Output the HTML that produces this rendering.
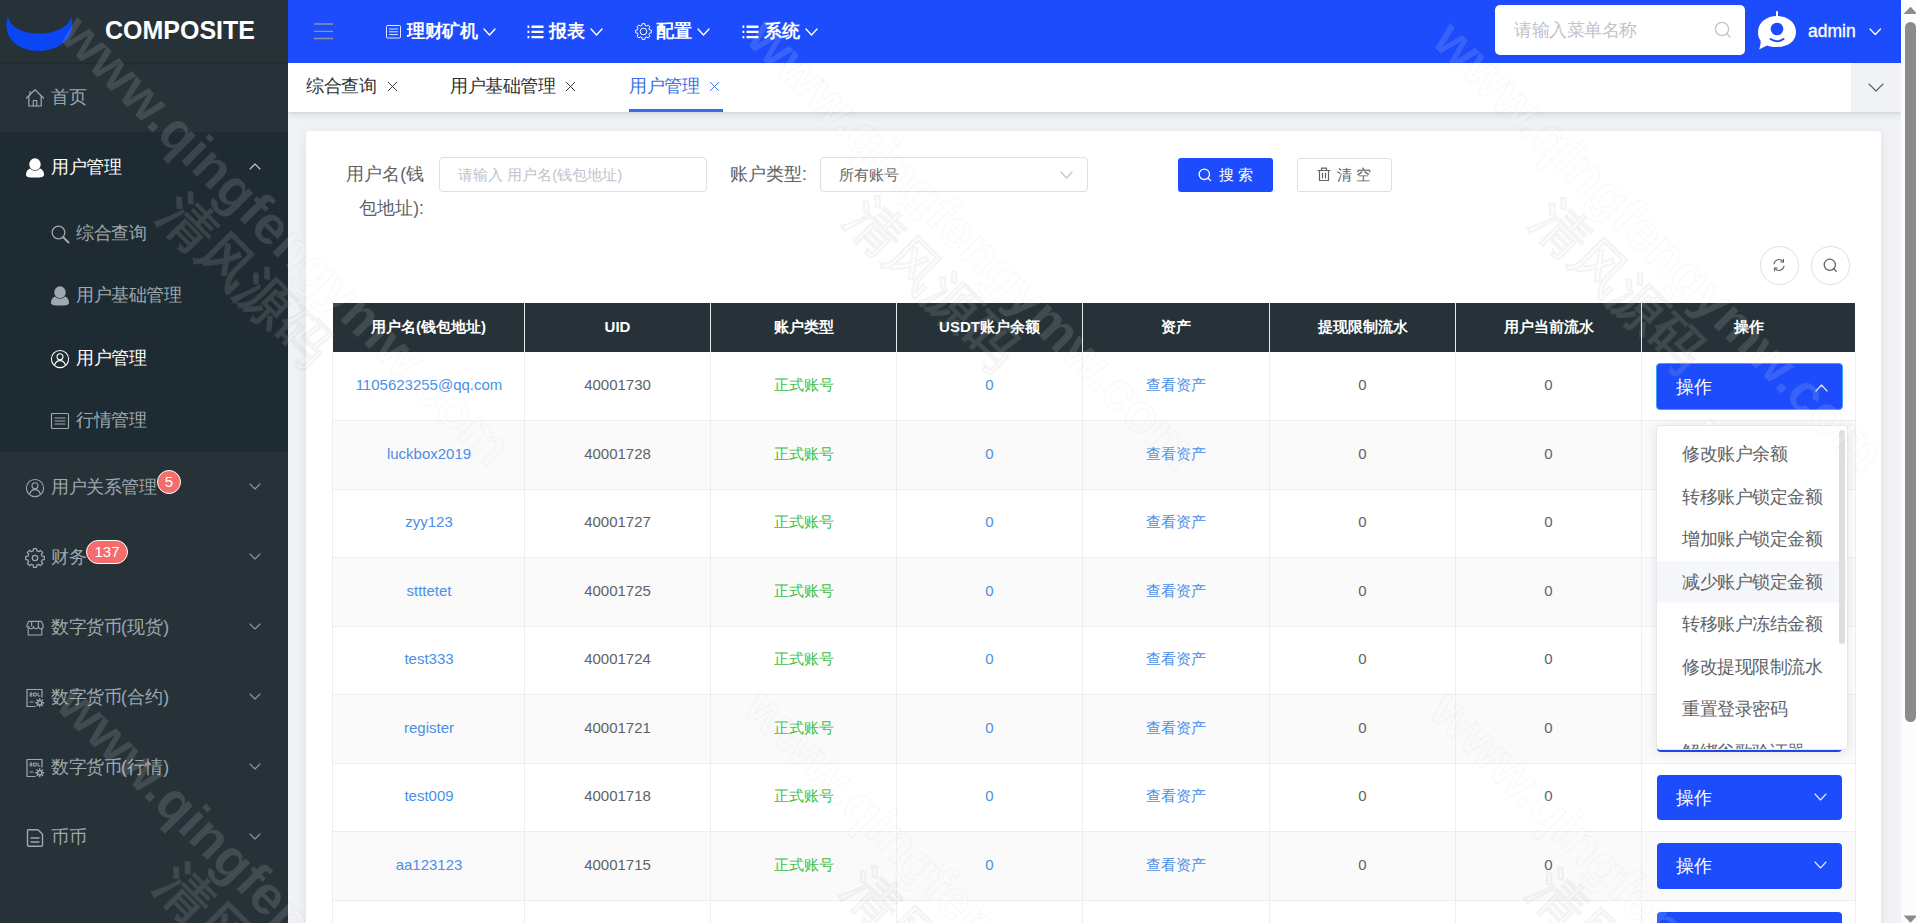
<!DOCTYPE html>
<html lang="zh">
<head>
<meta charset="utf-8">
<title>COMPOSITE</title>
<style>
*{box-sizing:border-box;margin:0;padding:0}
html,body{width:1916px;height:923px;overflow:hidden;background:#f0f2f5;font-family:"Liberation Sans",sans-serif;}
body{position:relative;color:#606266;font-size:15px}
.abs{position:absolute}
svg{display:block}
/* sidebar */
#side{position:absolute;left:0;top:0;width:288px;height:923px;background:#263238;overflow:hidden;z-index:4}
#logo{position:absolute;left:0;top:0;width:288px;height:62px;background:#263238;box-shadow:0 1px 3px rgba(0,0,0,.25)}
#logo .t{position:absolute;left:105px;top:15px;font-size:25px;line-height:30px;font-weight:bold;color:#fff;letter-spacing:0}
.mi{position:absolute;left:0;width:288px;height:70px;color:#a7b1b7;font-size:17.5px;line-height:70px}
.mi .ic{position:absolute;left:25px;top:26px;width:19px;height:19px}
.mi .tx{position:absolute;left:51px;top:0;white-space:nowrap;letter-spacing:-0.5px}
.mi .ar{position:absolute;left:249px;top:31px;width:12px;height:8px}
.smi{position:absolute;left:0;width:288px;height:62px;color:#a7b1b7;font-size:17.5px;line-height:62px}
.smi .ic{position:absolute;left:50px;top:22px;width:19px;height:19px}
.smi .tx{position:absolute;left:76px;top:0;white-space:nowrap;letter-spacing:-0.5px}
#sub{position:absolute;left:0;top:132px;width:288px;height:320px;background:#1f2b32}
.badge{position:absolute;height:22px;min-width:22px;border-radius:11px;background:#f56c6c;color:#fff;font-size:15px;line-height:20px;text-align:center;border:1px solid #fff;padding:0 6px}
/* top bar */
#top{position:absolute;left:288px;top:0;width:1613px;height:62.5px;background:#1c4cfb;z-index:3}
.tm{position:absolute;top:0;height:62px;line-height:62px;color:#fff;font-size:17.5px;white-space:nowrap;font-weight:bold;letter-spacing:-0.5px}
/* tabs */
#tabs{position:absolute;left:288px;top:62.5px;width:1613px;height:49.5px;background:#fff;box-shadow:0 1px 9px rgba(0,21,41,.15),0 1px 3px rgba(0,0,0,.06);z-index:2}
.tab{position:absolute;top:0;height:49px;line-height:47px;font-size:17.5px;color:#303133;white-space:nowrap;letter-spacing:-0.5px}
/* card */
#card{position:absolute;left:306px;top:131px;width:1575px;height:820px;background:#fff;border-radius:4px;box-shadow:0 2px 12px 0 rgba(0,0,0,.08)}
.lbl{position:absolute;font-size:17.5px;color:#606266;line-height:34px;white-space:nowrap}
.inp{position:absolute;height:35px;border:1px solid #dcdfe6;border-radius:4px;background:#fff;font-size:15px;line-height:33px;padding-left:18px;white-space:nowrap}
.btn{position:absolute;height:34px;border-radius:3px;font-size:15px;line-height:32px;text-align:center;white-space:nowrap}
.circ{position:absolute;width:38.5px;height:38.5px;border-radius:50%;border:1px solid #dcdfe6;background:#fff}
/* table */
#tbl{position:absolute;left:333px;top:303px;width:1522px;height:640px}
.th{position:absolute;top:0;height:49px;background:#263238;color:#fff;font-weight:bold;font-size:15px;line-height:47px;text-align:center;white-space:nowrap}
.row{position:absolute;left:-1px;width:1524px;border-bottom:1px solid #ebeef5;border-left:1px solid #ebeef5;border-right:1px solid #ebeef5}
.td{position:absolute;top:0;height:100%;text-align:center;font-size:15px;color:#606266;border-right:1px solid #ebeef5;white-space:nowrap}
.lk{color:#4a8fe8}
.gr{color:#3dbf3d}
.op{position:absolute;left:1324px;width:185px;height:45.5px;border-radius:4px;background:#1c4cfb;color:#fff;font-size:17.5px;line-height:45px;padding-left:18px}
/* dropdown */
#dd{position:absolute;left:1656px;top:425px;width:192px;height:325px;background:#fff;border-radius:4px;border:1px solid #e4e7ed;box-shadow:0 2px 12px 0 rgba(0,0,0,.1);overflow:hidden}
.di{position:absolute;left:0;width:189px;height:42.5px;line-height:42px;font-size:17.5px;color:#606266;padding-left:25px;white-space:nowrap;letter-spacing:-0.5px}
/* scrollbar */
#sb{position:absolute;left:1901px;top:0;width:15px;height:923px;background:#fcfcfc}
.wm{position:absolute;width:760px;height:114px;margin-left:-380px;margin-top:-57px;text-align:center;font-size:54px;font-weight:bold;line-height:57px;color:rgba(255,255,255,.125);-webkit-text-stroke:0.8px rgba(0,0,0,.045);transform:rotate(45deg);white-space:nowrap;pointer-events:none;z-index:50}
#sb{z-index:60}
</style>
</head>
<body>
<div id="side">
<div id="sub"></div>
<div id="logo"><svg class="abs" style="left:5px;top:14px" width="68" height="38" viewBox="0 0 68 38"><path d="M3 2 C-4 22 12 37 33 37 C56 37 72 22 66 2 C65 12 52 19.5 34 19.5 C16 19.5 4 12 3 2Z" fill="#0b46f5"/></svg><div class="t">COMPOSITE</div></div>
<div class="mi" style="top:62px;color:#9da8af"><div class="ic"><svg width="20" height="20" viewBox="0 0 20 20" fill="none" stroke="#9da8af" stroke-width="1.2" stroke-linejoin="round" stroke-linecap="round"><path d="M1.5 10 L10 1.8 L18.5 10"/><path d="M3.8 8.2 V18 H16.2 V8.2"/><path d="M8.3 18 V12.5 H11.7 V18"/><path d="M5 6.8 V3.5"/></svg></div><div class="tx">首页</div></div>
<div class="mi" style="top:132px;color:#ffffff"><div class="ic"><svg width="20" height="20" viewBox="0 0 20 20" fill="#ffffff"><ellipse cx="10" cy="6.2" rx="5.7" ry="6"/><path d="M1 16.8 C1 13 3 11.2 5.2 10.6 C6.5 12 8 12.8 10 12.8 S13.5 12 14.8 10.6 C17 11.2 19 13 19 16.8 C19 18.8 17 19.6 10 19.6 S1 18.8 1 16.8Z"/></svg></div><div class="tx">用户管理</div><div class="ar"><svg width="12" height="7" viewBox="0 0 12 7"><polyline points="1,6 6.0,1 11,6" fill="none" stroke="#c3c9cd" stroke-width="1.1" stroke-linecap="round" stroke-linejoin="round"/></svg></div></div>
<div class="smi" style="top:202px;color:#9da8af"><div class="ic"><svg width="20" height="20" viewBox="0 0 20 20" fill="none" stroke="#9da8af" stroke-width="1.3" stroke-linecap="round"><circle cx="8.5" cy="8.5" r="6.3"/><path d="M13.2 13.2 L18.5 18.5" stroke-width="2"/></svg></div><div class="tx">综合查询</div></div>
<div class="smi" style="top:264px;color:#9da8af"><div class="ic"><svg width="20" height="20" viewBox="0 0 20 20" fill="#9da8af"><ellipse cx="10" cy="6.2" rx="5.7" ry="6"/><path d="M1 16.8 C1 13 3 11.2 5.2 10.6 C6.5 12 8 12.8 10 12.8 S13.5 12 14.8 10.6 C17 11.2 19 13 19 16.8 C19 18.8 17 19.6 10 19.6 S1 18.8 1 16.8Z"/></svg></div><div class="tx">用户基础管理</div></div>
<div class="smi" style="top:327px;color:#ffffff"><div class="ic"><svg width="20" height="20" viewBox="0 0 20 20" fill="none" stroke="#ffffff" stroke-width="1.05" stroke-linecap="round"><circle cx="10" cy="10" r="8.6"/><circle cx="10" cy="7.8" r="3"/><path d="M4.6 16.2 C5.6 12.8 8 11.6 10 11.6 S14.4 12.8 15.4 16.2"/></svg></div><div class="tx">用户管理</div></div>
<div class="smi" style="top:389px;color:#9da8af"><div class="ic"><svg width="20" height="20" viewBox="0 0 20 20" fill="none" stroke="#9da8af" stroke-width="1.2" stroke-linecap="round" stroke-linejoin="round"><rect x="1.5" y="2.5" width="17" height="15" rx="1"/><path d="M5 7 H15 M5 10 H15 M5 13 H15"/></svg></div><div class="tx">行情管理</div></div>
<div class="mi" style="top:452px;color:#9da8af"><div class="ic"><svg width="20" height="20" viewBox="0 0 20 20" fill="none" stroke="#9da8af" stroke-width="1.05" stroke-linecap="round"><circle cx="10" cy="10" r="8.6"/><circle cx="10" cy="7.8" r="3"/><path d="M4.6 16.2 C5.6 12.8 8 11.6 10 11.6 S14.4 12.8 15.4 16.2"/></svg></div><div class="tx">用户关系管理</div><div class="ar"><svg width="12" height="7" viewBox="0 0 12 7"><polyline points="1,1 6.0,6 11,1" fill="none" stroke="#8d979d" stroke-width="1.1" stroke-linecap="round" stroke-linejoin="round"/></svg></div><div class="badge" style="left:157px;top:18px;width:24px;height:24px;line-height:22px;padding:0;border-radius:12px">5</div></div>
<div class="mi" style="top:522px;color:#9da8af"><div class="ic"><svg width="20" height="20" viewBox="0 0 20 20" fill="none" stroke="#9da8af" stroke-width="1.25" stroke-linejoin="round"><path d="M8.22 2.82 L8.46 0.73 L11.54 0.73 L11.78 2.82 L13.82 3.66 L15.47 2.35 L17.65 4.53 L16.34 6.18 L17.18 8.22 L19.27 8.46 L19.27 11.54 L17.18 11.78 L16.34 13.82 L17.65 15.47 L15.47 17.65 L13.82 16.34 L11.78 17.18 L11.54 19.27 L8.46 19.27 L8.22 17.18 L6.18 16.34 L4.53 17.65 L2.35 15.47 L3.66 13.82 L2.82 11.78 L0.73 11.54 L0.73 8.46 L2.82 8.22 L3.66 6.18 L2.35 4.53 L4.53 2.35 L6.18 3.66Z"/><circle cx="10" cy="10" r="2.7"/></svg></div><div class="tx">财务</div><div class="ar"><svg width="12" height="7" viewBox="0 0 12 7"><polyline points="1,1 6.0,6 11,1" fill="none" stroke="#8d979d" stroke-width="1.1" stroke-linecap="round" stroke-linejoin="round"/></svg></div><div class="badge" style="left:86px;top:18px;width:42px;height:24px;line-height:22px;padding:0;border-radius:12px">137</div></div>
<div class="mi" style="top:592px;color:#9da8af"><div class="ic"><svg width="20" height="20" viewBox="-1 -1.2 22 22" fill="none" stroke="#9da8af" stroke-width="1.2" stroke-linejoin="round" stroke-linecap="round"><path d="M3 2.5 H17 L19 7 V8 a2.6 2.6 0 0 1 -5.3 0 a2.6 2.6 0 0 1 -5.3 0 a2.6 2.6 0 0 1 -5.3 0 a1 1 0 0 1 -2.1 0 V7Z"/><path d="M2.5 10.5 V17.5 H17.5 V10.5"/><path d="M6.3 3 V7.5 M13.7 3 V7.5"/></svg></div><div class="tx">数字货币<span style="letter-spacing:0.4px">(</span>现<span style="letter-spacing:0.4px">货)</span></div><div class="ar"><svg width="12" height="7" viewBox="0 0 12 7"><polyline points="1,1 6.0,6 11,1" fill="none" stroke="#8d979d" stroke-width="1.1" stroke-linecap="round" stroke-linejoin="round"/></svg></div></div>
<div class="mi" style="top:662px;color:#9da8af"><div class="ic"><svg width="20" height="20" viewBox="0 0 20 20" fill="none" stroke="#9da8af" stroke-width="1.2" stroke-linejoin="round" stroke-linecap="round"><path d="M10 18.5 H2 V1.5 H17 V9"/><path d="M5 5 h2 v1.5 h-2 v1.5 h2 M9 5 h2.2 v3 h-2.2z M13 5 v3 h2" stroke-width="1"/><path d="M5 14 H8"/><circle cx="14.8" cy="14.8" r="2" /><path d="M14.8 10.8 v1.6 M14.8 17.2 v1.6 M10.8 14.8 h1.6 M17.2 14.8 h1.6 M12 12 l1.1 1.1 M16.5 16.5 l1.1 1.1 M12 17.6 l1.1 -1.1 M16.5 13.1 l1.1 -1.1" stroke-width="1.4"/></svg></div><div class="tx">数字货币<span style="letter-spacing:0.4px">(</span>合<span style="letter-spacing:0.4px">约)</span></div><div class="ar"><svg width="12" height="7" viewBox="0 0 12 7"><polyline points="1,1 6.0,6 11,1" fill="none" stroke="#8d979d" stroke-width="1.1" stroke-linecap="round" stroke-linejoin="round"/></svg></div></div>
<div class="mi" style="top:732px;color:#9da8af"><div class="ic"><svg width="20" height="20" viewBox="0 0 20 20" fill="none" stroke="#9da8af" stroke-width="1.2" stroke-linejoin="round" stroke-linecap="round"><path d="M10 18.5 H2 V1.5 H17 V9"/><path d="M5 5 h2 v1.5 h-2 v1.5 h2 M9 5 h2.2 v3 h-2.2z M13 5 v3 h2" stroke-width="1"/><path d="M5 14 H8"/><circle cx="14.8" cy="14.8" r="2" /><path d="M14.8 10.8 v1.6 M14.8 17.2 v1.6 M10.8 14.8 h1.6 M17.2 14.8 h1.6 M12 12 l1.1 1.1 M16.5 16.5 l1.1 1.1 M12 17.6 l1.1 -1.1 M16.5 13.1 l1.1 -1.1" stroke-width="1.4"/></svg></div><div class="tx">数字货币<span style="letter-spacing:0.4px">(</span>行<span style="letter-spacing:0.4px">情)</span></div><div class="ar"><svg width="12" height="7" viewBox="0 0 12 7"><polyline points="1,1 6.0,6 11,1" fill="none" stroke="#8d979d" stroke-width="1.1" stroke-linecap="round" stroke-linejoin="round"/></svg></div></div>
<div class="mi" style="top:802px;color:#9da8af"><div class="ic"><svg width="20" height="20" viewBox="0 0 20 20" fill="none" stroke="#9da8af" stroke-width="1.4" stroke-linejoin="round" stroke-linecap="round"><path d="M3.5 1.8 H13 L17.5 6.2 V17 a1.3 1.3 0 0 1 -1.3 1.3 H3.8 A1.3 1.3 0 0 1 2.5 17 V3 a1.2 1.2 0 0 1 1 -1.2Z"/><path d="M6 10 H14 M6 14 H14"/></svg></div><div class="tx">币币</div><div class="ar"><svg width="12" height="7" viewBox="0 0 12 7"><polyline points="1,1 6.0,6 11,1" fill="none" stroke="#8d979d" stroke-width="1.1" stroke-linecap="round" stroke-linejoin="round"/></svg></div></div>
</div>
<div id="top">
<svg class="abs" style="left:26px;top:23px" width="20" height="17" viewBox="0 0 20 17"><path d="M0 1 H19 M0 8.3 H19 M0 15.5 H19" stroke="#8f94a3" stroke-width="1.3"/></svg>
<div class="abs" style="left:97px;top:23px"><svg width="17" height="17" viewBox="0 0 17 17" fill="none" stroke="#e3e9ff" stroke-width="1" stroke-linecap="round" stroke-linejoin="round"><rect x="1.5" y="2.5" width="14" height="12.5" rx="1"/><path d="M4.5 6 H12.5 M4.5 8.8 H12.5 M4.5 11.6 H12.5"/></svg></div>
<div class="tm" style="left:119px">理财矿机</div>
<div class="abs" style="left:195px;top:28px"><svg width="13" height="8" viewBox="0 0 13 8"><polyline points="1,1 6.5,7 12,1" fill="none" stroke="#fff" stroke-width="1.4" stroke-linecap="round" stroke-linejoin="round"/></svg></div>
<div class="abs" style="left:239px;top:23px"><svg width="17" height="17" viewBox="0 0 17 17" fill="none" stroke="#fff" stroke-width="2.35" stroke-linecap="butt"><path d="M4.5 3.7 H16.5 M4.5 8.9 H16.5 M4.5 14.1 H16.5"/><path d="M0.5 3.7 H2.3 M0.5 8.9 H2.3 M0.5 14.1 H2.3"/></svg></div>
<div class="tm" style="left:261px">报表</div>
<div class="abs" style="left:302px;top:28px"><svg width="13" height="8" viewBox="0 0 13 8"><polyline points="1,1 6.5,7 12,1" fill="none" stroke="#fff" stroke-width="1.4" stroke-linecap="round" stroke-linejoin="round"/></svg></div>
<div class="abs" style="left:347px;top:23px"><svg width="17" height="17" viewBox="0 0 20 20" fill="none" stroke="#fff" stroke-width="1.15" stroke-linejoin="round"><path d="M8.22 2.82 L8.46 0.73 L11.54 0.73 L11.78 2.82 L13.82 3.66 L15.47 2.35 L17.65 4.53 L16.34 6.18 L17.18 8.22 L19.27 8.46 L19.27 11.54 L17.18 11.78 L16.34 13.82 L17.65 15.47 L15.47 17.65 L13.82 16.34 L11.78 17.18 L11.54 19.27 L8.46 19.27 L8.22 17.18 L6.18 16.34 L4.53 17.65 L2.35 15.47 L3.66 13.82 L2.82 11.78 L0.73 11.54 L0.73 8.46 L2.82 8.22 L3.66 6.18 L2.35 4.53 L4.53 2.35 L6.18 3.66Z"/><circle cx="10" cy="10" r="3.9"/></svg></div>
<div class="tm" style="left:368px">配置</div>
<div class="abs" style="left:409px;top:28px"><svg width="13" height="8" viewBox="0 0 13 8"><polyline points="1,1 6.5,7 12,1" fill="none" stroke="#fff" stroke-width="1.4" stroke-linecap="round" stroke-linejoin="round"/></svg></div>
<div class="abs" style="left:454px;top:23px"><svg width="17" height="17" viewBox="0 0 17 17" fill="none" stroke="#fff" stroke-width="2.35" stroke-linecap="butt"><path d="M4.5 3.7 H16.5 M4.5 8.9 H16.5 M4.5 14.1 H16.5"/><path d="M0.5 3.7 H2.3 M0.5 8.9 H2.3 M0.5 14.1 H2.3"/></svg></div>
<div class="tm" style="left:476px">系统</div>
<div class="abs" style="left:517px;top:28px"><svg width="13" height="8" viewBox="0 0 13 8"><polyline points="1,1 6.5,7 12,1" fill="none" stroke="#fff" stroke-width="1.4" stroke-linecap="round" stroke-linejoin="round"/></svg></div>
<div class="abs" style="left:1207px;top:5px;width:250px;height:50px;background:#fff;border-radius:5px"><div class="abs" style="left:19px;top:0;line-height:51px;font-size:17.5px;color:#c0c4cc;white-space:nowrap;letter-spacing:-0.5px">请输入菜单名称</div><svg class="abs" style="left:219px;top:16px" width="18" height="18" viewBox="0 0 18 18" fill="none" stroke="#c0c4cc" stroke-width="1.3" stroke-linecap="round"><circle cx="8" cy="8" r="6.6"/><path d="M12.8 12.8 L16 16"/></svg></div>
<svg class="abs" style="left:1468px;top:10px" width="42" height="42" viewBox="0 0 42 42"><path d="M21 6 C31 6 40 12 40 22 C40 32 31 37 21 37 C17 37 13.5 36.5 11 35.5 L3 39.5 C4 37 5 33.5 4.5 30.5 C2.5 28 2 25 2 22 C2 12 11 6 21 6Z" fill="#fff"/><rect x="20" y="1" width="2" height="7" rx="1" fill="#fff"/><circle cx="21" cy="19" r="6.3" fill="#1c4cfb"/><path d="M14.5 29 Q21 33.5 27.5 29" fill="none" stroke="#1c4cfb" stroke-width="2" stroke-linecap="round"/></svg>
<div class="tm" style="left:1520px;font-weight:normal;letter-spacing:0;-webkit-text-stroke:0.35px #fff">admin</div>
<div class="abs" style="left:1581px;top:28px"><svg width="12.5" height="7.5" viewBox="0 0 12.5 7.5"><polyline points="1,1 6.25,6.5 11.5,1" fill="none" stroke="#fff" stroke-width="1.3" stroke-linecap="round" stroke-linejoin="round"/></svg></div>
</div>
<div id="tabs">
<div class="tab" style="left:18px">综合查询</div><svg class="abs" style="left:99px;top:18.5px" width="11" height="11" viewBox="0 0 11 11"><path d="M1 1 L10 10 M10 1 L1 10" stroke="#303133" stroke-width="0.95"/></svg>
<div class="tab" style="left:162px">用户基础管理</div><svg class="abs" style="left:277px;top:18.5px" width="11" height="11" viewBox="0 0 11 11"><path d="M1 1 L10 10 M10 1 L1 10" stroke="#303133" stroke-width="0.95"/></svg>
<div class="tab" style="left:341px;color:#3a70e8">用户管理</div><svg class="abs" style="left:421px;top:18.5px" width="11" height="11" viewBox="0 0 11 11"><path d="M1 1 L10 10 M10 1 L1 10" stroke="#3a70e8" stroke-width="0.95"/></svg>
<div class="abs" style="left:340.5px;top:46.5px;width:94.5px;height:3px;background:#346eeb"></div>
<div class="abs" style="left:1563px;top:0;width:50px;height:49px;background:#f0f2f5"><div class="abs" style="left:17px;top:20px"><svg width="16" height="9" viewBox="0 0 16 9"><polyline points="1,1 8.0,8 15,1" fill="none" stroke="#5a5f68" stroke-width="1.1" stroke-linecap="round" stroke-linejoin="round"/></svg></div></div>
</div>
<div id="card"></div>
<div class="lbl" style="left:300px;top:157px;width:124px;text-align:right">用户名(钱</div>
<div class="lbl" style="left:300px;top:191px;width:124px;text-align:right">包地址):</div>
<div class="inp" style="left:439px;top:157px;width:268px;color:#c0c4cc">请输入 用户名(钱包地址)</div>
<div class="lbl" style="left:730px;top:157px">账户类型:</div>
<div class="inp" style="left:820px;top:157px;width:268px;color:#606266">所有账号<div class="abs" style="left:239px;top:13px"><svg width="13" height="8" viewBox="0 0 13 8"><polyline points="1,1 6.5,7 12,1" fill="none" stroke="#c0c4cc" stroke-width="1.2" stroke-linecap="round" stroke-linejoin="round"/></svg></div></div>
<div class="btn" style="left:1178px;top:158px;width:95px;background:#1c4cfb;color:#fff;line-height:34px"><svg class="abs" style="left:20px;top:10px" width="14" height="14" viewBox="0 0 14 14" fill="none" stroke="#fff" stroke-width="1.3" stroke-linecap="round"><circle cx="6.3" cy="6.3" r="5.2"/><path d="M10.2 10.2 L12.6 12.6"/></svg><span class="abs" style="left:41px;top:0">搜 索</span></div>
<div class="btn" style="left:1297px;top:158px;width:95px;background:#fff;border:1px solid #dcdfe6;color:#606266"><svg class="abs" style="left:19px;top:8px" width="14" height="15" viewBox="0 0 14 15" fill="none" stroke="#606266" stroke-width="1.2" stroke-linecap="round" stroke-linejoin="round"><path d="M1 3.5 H13 M4.5 3.2 V1.2 H9.5 V3.2 M2.5 3.5 V13.5 H11.5 V3.5 M5.5 6 V11 M8.5 6 V11"/></svg><span class="abs" style="left:39px;top:0">清 空</span></div>
<div class="circ" style="left:1760px;top:246px"><svg class="abs" style="left:11px;top:11px" width="14" height="14" viewBox="0 0 14 14" fill="none" stroke="#606266" stroke-width="1.1" stroke-linecap="round" stroke-linejoin="round"><path d="M2 6 A5 5 0 0 1 11 3.6 M12 8 A5 5 0 0 1 3 10.4"/><path d="M11.5 1.2 V4 H8.7 M2.5 12.8 V10 H5.3"/></svg></div>
<div class="circ" style="left:1811px;top:246px"><svg class="abs" style="left:11px;top:11px" width="15" height="15" viewBox="0 0 15 15" fill="none" stroke="#606266" stroke-width="1.3" stroke-linecap="round"><circle cx="6.8" cy="6.8" r="5.6"/><path d="M11 11 L13.2 13.2"/></svg></div>
<div id="tbl">
<div class="th" style="left:0px;width:192px;border-right:1px solid #e6e9ee;">用户名(钱包地址)</div>
<div class="th" style="left:192px;width:186px;border-right:1px solid #e6e9ee;">UID</div>
<div class="th" style="left:378px;width:186px;border-right:1px solid #e6e9ee;">账户类型</div>
<div class="th" style="left:564px;width:186px;border-right:1px solid #e6e9ee;">USDT账户余额</div>
<div class="th" style="left:750px;width:187px;border-right:1px solid #e6e9ee;">资产</div>
<div class="th" style="left:937px;width:186px;border-right:1px solid #e6e9ee;">提现限制流水</div>
<div class="th" style="left:1123px;width:186px;border-right:1px solid #e6e9ee;">用户当前流水</div>
<div class="th" style="left:1309px;width:213px;">操作</div>
<div class="row" style="top:49px;height:69px;background:#fff;line-height:66.2px">
<div class="td lk" style="left:1px;width:191px">1105623255@qq.com</div>
<div class="td " style="left:192px;width:186px">40001730</div>
<div class="td gr" style="left:378px;width:186px">正式账号</div>
<div class="td lk" style="left:564px;width:186px">0</div>
<div class="td lk" style="left:750px;width:187px">查看资产</div>
<div class="td " style="left:937px;width:186px">0</div>
<div class="td " style="left:1123px;width:186px">0</div>
<div class="td " style="left:1309px;width:213px;border-right:none"></div>
<div class="op" style="left:1323px;width:187px;height:47px;line-height:46px;top:11.3px;border:1px solid #3f9eff;"><span class="abs" style="left:18.5px;top:0px">操作</span><div class="abs" style="left:158px;top:20px"><svg width="13" height="8" viewBox="0 0 13 8"><polyline points="1,7 6.5,1 12,7" fill="none" stroke="#d9dde8" stroke-width="1.3" stroke-linecap="round" stroke-linejoin="round"/></svg></div></div>
</div>
<div class="row" style="top:118px;height:69px;background:#fafafa;line-height:65.2px">
<div class="td lk" style="left:1px;width:191px">luckbox2019</div>
<div class="td " style="left:192px;width:186px">40001728</div>
<div class="td gr" style="left:378px;width:186px">正式账号</div>
<div class="td lk" style="left:564px;width:186px">0</div>
<div class="td lk" style="left:750px;width:187px">查看资产</div>
<div class="td " style="left:937px;width:186px">0</div>
<div class="td " style="left:1123px;width:186px">0</div>
<div class="td " style="left:1309px;width:213px;border-right:none"></div>
<div class="op" style="top:10.8px;"><span class="abs" style="left:19px;top:1px">操作</span><div class="abs" style="left:157px;top:18px"><svg width="13" height="8" viewBox="0 0 13 8"><polyline points="1,1 6.5,7 12,1" fill="none" stroke="#e6eaff" stroke-width="1.15" stroke-linecap="round" stroke-linejoin="round"/></svg></div></div>
</div>
<div class="row" style="top:187px;height:68px;background:#fff;line-height:64.2px">
<div class="td lk" style="left:1px;width:191px">zyy123</div>
<div class="td " style="left:192px;width:186px">40001727</div>
<div class="td gr" style="left:378px;width:186px">正式账号</div>
<div class="td lk" style="left:564px;width:186px">0</div>
<div class="td lk" style="left:750px;width:187px">查看资产</div>
<div class="td " style="left:937px;width:186px">0</div>
<div class="td " style="left:1123px;width:186px">0</div>
<div class="td " style="left:1309px;width:213px;border-right:none"></div>
<div class="op" style="top:10.4px;"><span class="abs" style="left:19px;top:1px">操作</span><div class="abs" style="left:157px;top:18px"><svg width="13" height="8" viewBox="0 0 13 8"><polyline points="1,1 6.5,7 12,1" fill="none" stroke="#e6eaff" stroke-width="1.15" stroke-linecap="round" stroke-linejoin="round"/></svg></div></div>
</div>
<div class="row" style="top:255px;height:69px;background:#fafafa;line-height:65.2px">
<div class="td lk" style="left:1px;width:191px">stttetet</div>
<div class="td " style="left:192px;width:186px">40001725</div>
<div class="td gr" style="left:378px;width:186px">正式账号</div>
<div class="td lk" style="left:564px;width:186px">0</div>
<div class="td lk" style="left:750px;width:187px">查看资产</div>
<div class="td " style="left:937px;width:186px">0</div>
<div class="td " style="left:1123px;width:186px">0</div>
<div class="td " style="left:1309px;width:213px;border-right:none"></div>
<div class="op" style="top:10.9px;"><span class="abs" style="left:19px;top:1px">操作</span><div class="abs" style="left:157px;top:18px"><svg width="13" height="8" viewBox="0 0 13 8"><polyline points="1,1 6.5,7 12,1" fill="none" stroke="#e6eaff" stroke-width="1.15" stroke-linecap="round" stroke-linejoin="round"/></svg></div></div>
</div>
<div class="row" style="top:324px;height:68px;background:#fff;line-height:64.2px">
<div class="td lk" style="left:1px;width:191px">test333</div>
<div class="td " style="left:192px;width:186px">40001724</div>
<div class="td gr" style="left:378px;width:186px">正式账号</div>
<div class="td lk" style="left:564px;width:186px">0</div>
<div class="td lk" style="left:750px;width:187px">查看资产</div>
<div class="td " style="left:937px;width:186px">0</div>
<div class="td " style="left:1123px;width:186px">0</div>
<div class="td " style="left:1309px;width:213px;border-right:none"></div>
<div class="op" style="top:10.4px;"><span class="abs" style="left:19px;top:1px">操作</span><div class="abs" style="left:157px;top:18px"><svg width="13" height="8" viewBox="0 0 13 8"><polyline points="1,1 6.5,7 12,1" fill="none" stroke="#e6eaff" stroke-width="1.15" stroke-linecap="round" stroke-linejoin="round"/></svg></div></div>
</div>
<div class="row" style="top:392px;height:69px;background:#fafafa;line-height:65.2px">
<div class="td lk" style="left:1px;width:191px">register</div>
<div class="td " style="left:192px;width:186px">40001721</div>
<div class="td gr" style="left:378px;width:186px">正式账号</div>
<div class="td lk" style="left:564px;width:186px">0</div>
<div class="td lk" style="left:750px;width:187px">查看资产</div>
<div class="td " style="left:937px;width:186px">0</div>
<div class="td " style="left:1123px;width:186px">0</div>
<div class="td " style="left:1309px;width:213px;border-right:none"></div>
<div class="op" style="top:11.0px;"><span class="abs" style="left:19px;top:1px">操作</span><div class="abs" style="left:157px;top:18px"><svg width="13" height="8" viewBox="0 0 13 8"><polyline points="1,1 6.5,7 12,1" fill="none" stroke="#e6eaff" stroke-width="1.15" stroke-linecap="round" stroke-linejoin="round"/></svg></div></div>
</div>
<div class="row" style="top:461px;height:68px;background:#fff;line-height:64.2px">
<div class="td lk" style="left:1px;width:191px">test009</div>
<div class="td " style="left:192px;width:186px">40001718</div>
<div class="td gr" style="left:378px;width:186px">正式账号</div>
<div class="td lk" style="left:564px;width:186px">0</div>
<div class="td lk" style="left:750px;width:187px">查看资产</div>
<div class="td " style="left:937px;width:186px">0</div>
<div class="td " style="left:1123px;width:186px">0</div>
<div class="td " style="left:1309px;width:213px;border-right:none"></div>
<div class="op" style="top:10.5px;"><span class="abs" style="left:19px;top:1px">操作</span><div class="abs" style="left:157px;top:18px"><svg width="13" height="8" viewBox="0 0 13 8"><polyline points="1,1 6.5,7 12,1" fill="none" stroke="#e6eaff" stroke-width="1.15" stroke-linecap="round" stroke-linejoin="round"/></svg></div></div>
</div>
<div class="row" style="top:529px;height:69px;background:#fafafa;line-height:65.2px">
<div class="td lk" style="left:1px;width:191px">aa123123</div>
<div class="td " style="left:192px;width:186px">40001715</div>
<div class="td gr" style="left:378px;width:186px">正式账号</div>
<div class="td lk" style="left:564px;width:186px">0</div>
<div class="td lk" style="left:750px;width:187px">查看资产</div>
<div class="td " style="left:937px;width:186px">0</div>
<div class="td " style="left:1123px;width:186px">0</div>
<div class="td " style="left:1309px;width:213px;border-right:none"></div>
<div class="op" style="top:11.0px;"><span class="abs" style="left:19px;top:1px">操作</span><div class="abs" style="left:157px;top:18px"><svg width="13" height="8" viewBox="0 0 13 8"><polyline points="1,1 6.5,7 12,1" fill="none" stroke="#e6eaff" stroke-width="1.15" stroke-linecap="round" stroke-linejoin="round"/></svg></div></div>
</div>
<div class="row" style="top:598px;height:68px;background:#fff;line-height:64.2px">
<div class="td lk" style="left:1px;width:191px">abc</div>
<div class="td " style="left:192px;width:186px">40001712</div>
<div class="td gr" style="left:378px;width:186px">正式账号</div>
<div class="td lk" style="left:564px;width:186px">0</div>
<div class="td lk" style="left:750px;width:187px">查看资产</div>
<div class="td " style="left:937px;width:186px">0</div>
<div class="td " style="left:1123px;width:186px">0</div>
<div class="td " style="left:1309px;width:213px;border-right:none"></div>
<div class="op" style="top:10.5px;"><span class="abs" style="left:19px;top:1px">操作</span><div class="abs" style="left:157px;top:18px"><svg width="13" height="8" viewBox="0 0 13 8"><polyline points="1,1 6.5,7 12,1" fill="none" stroke="#e6eaff" stroke-width="1.15" stroke-linecap="round" stroke-linejoin="round"/></svg></div></div>
</div>
</div>
<div class="abs" style="left:1703px;top:420px;width:0;height:0;border-left:6px solid transparent;border-right:6px solid transparent;border-bottom:6px solid #fff;filter:drop-shadow(0 -1px 1px rgba(0,0,0,.06))"></div>
<div id="dd">
<div class="di" style="top:7.0px;">修改账户余额</div>
<div class="di" style="top:49.5px;">转移账户锁定金额</div>
<div class="di" style="top:92.0px;">增加账户锁定金额</div>
<div class="di" style="top:134.5px;background:#f5f7fa;">减少账户锁定金额</div>
<div class="di" style="top:177.0px;">转移账户冻结金额</div>
<div class="di" style="top:219.5px;">修改提现限制流水</div>
<div class="di" style="top:262.0px;">重置登录密码</div>
<div class="di" style="top:304.5px;">解绑谷歌验证器</div>
<div class="abs" style="left:182px;top:4px;width:6px;height:214px;border-radius:4px;background:#dddee0"></div>
</div>
<div class="wm" style="left:266px;top:260px">www.qingfengymw.com<br>清风源码</div>
<div class="wm" style="left:953px;top:264px">www.qingfengymw.com<br>清风源码</div>
<div class="wm" style="left:1639px;top:266px">www.qingfengymw.com<br>清风源码</div>
<div class="wm" style="left:263px;top:930px">www.qingfengymw.com<br>清风源码</div>
<div class="wm" style="left:950px;top:934px">www.qingfengymw.com<br>清风源码</div>
<div class="wm" style="left:1636px;top:936px">www.qingfengymw.com<br>清风源码</div>
<div id="sb"><svg class="abs" style="left:2px;top:6px" width="13" height="8" viewBox="0 0 13 8"><path d="M0.5 8 L7.5 0.8 L14.5 8Z" fill="#8b8b8b"/></svg><div class="abs" style="left:4px;top:22px;width:11px;height:700px;border-radius:5.5px;background:#8b8b8b"></div><svg class="abs" style="left:2px;top:915px" width="13" height="8" viewBox="0 0 13 8"><path d="M0.5 0.5 L7.5 7.7 L14.5 0.5Z" fill="#8b8b8b"/></svg></div>
</body>
</html>
